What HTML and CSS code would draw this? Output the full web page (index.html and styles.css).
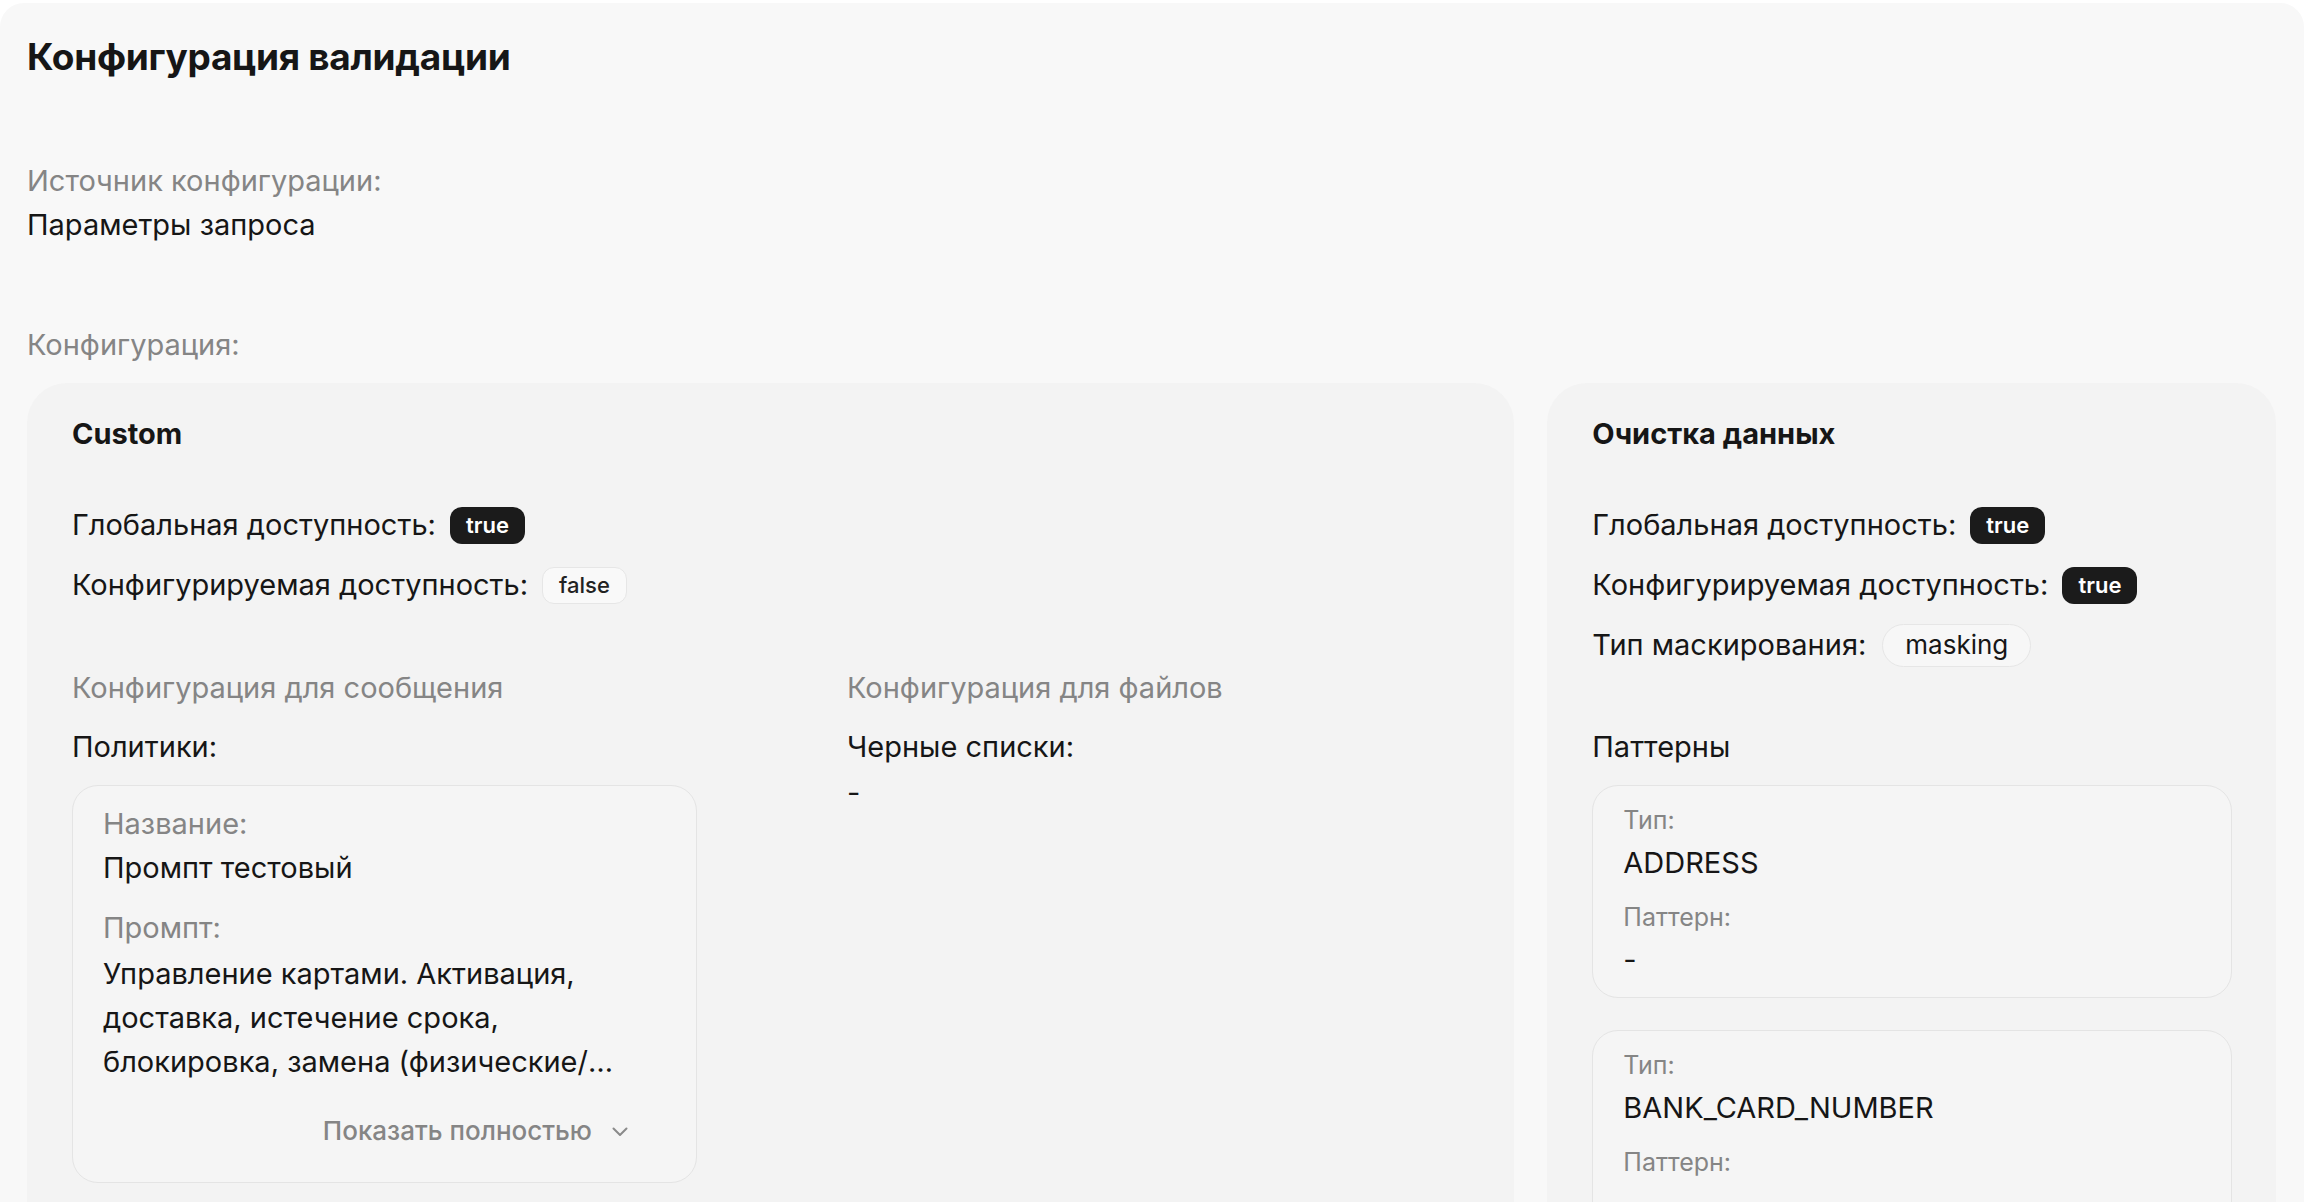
FILE: index.html
```html
<!DOCTYPE html>
<html lang="ru">
<head>
<meta charset="utf-8">
<title>Конфигурация валидации</title>
<link rel="stylesheet" href="styles.css">
</head>
<body>
<main class="panel">
  <h1 class="title">Конфигурация валидации</h1>

  <section class="field source">
    <div class="label">Источник конфигурации:</div>
    <div class="value">Параметры запроса</div>
  </section>

  <section class="field config">
    <div class="label">Конфигурация:</div>
    <div class="cards">
      <article class="card card-custom">
        <h2 class="card-title">Custom</h2>
        <div class="props">
          <div class="prop"><span>Глобальная доступность:</span><span class="badge badge-on">true</span></div>
          <div class="prop"><span>Конфигурируемая доступность:</span><span class="badge badge-off">false</span></div>
        </div>
        <div class="columns">
          <div class="col">
            <div class="sub">Конфигурация для сообщения</div>
            <div class="col-label">Политики:</div>
            <div class="item policy">
              <div class="item-label">Название:</div>
              <div class="item-value">Промпт тестовый</div>
              <div class="item-label gap">Промпт:</div>
              <div class="item-value clamp">Управление картами. Активация, доставка, истечение срока, блокировка, замена (физические/виртуальные), перевыпуск и закрытие карт.</div>
              <div class="more"><span>Показать полностью</span>
                <svg class="chev" viewBox="0 0 16 10" width="16" height="10"><path d="M1.5 1.5 L8 8 L14.5 1.5" fill="none" stroke="#8a8a8a" stroke-width="2" stroke-linecap="round" stroke-linejoin="round"/></svg>
              </div>
            </div>
          </div>
          <div class="col">
            <div class="sub">Конфигурация для файлов</div>
            <div class="col-label">Черные списки:</div>
            <div class="dash">-</div>
          </div>
        </div>
      </article>

      <article class="card card-clean">
        <h2 class="card-title">Очистка данных</h2>
        <div class="props">
          <div class="prop"><span>Глобальная доступность:</span><span class="badge badge-on">true</span></div>
          <div class="prop"><span>Конфигурируемая доступность:</span><span class="badge badge-on">true</span></div>
          <div class="prop"><span>Тип маскирования:</span><span class="pill">masking</span></div>
        </div>
        <div class="col-label patterns">Паттерны</div>
        <div class="item pattern">
          <div class="p-label">Тип:</div>
          <div class="p-value">ADDRESS</div>
          <div class="p-label gap2">Паттерн:</div>
          <div class="p-value">-</div>
        </div>
        <div class="item pattern">
          <div class="p-label">Тип:</div>
          <div class="p-value">BANK_CARD_NUMBER</div>
          <div class="p-label gap2">Паттерн:</div>
          <div class="p-value">-</div>
        </div>
      </article>
    </div>
  </section>
</main>
</body>
</html>
```
FILE: styles.css
```css
* { box-sizing: border-box; }
html, body { margin: 0; padding: 0; background: #ffffff; }
body {
  font-family: "Inter", "Noto Sans", sans-serif;
  color: #161616;
  overflow: hidden;
}
.panel {
  margin-top: 3px;
  width: 2304px;
  height: 1199px;
  background: #f8f8f8;
  border-radius: 24px 24px 0 0;
  padding: 31px 28px 0 27px;
}
.title {
  margin: 0;
  font-size: 37px;
  line-height: 46px;
  font-weight: 700;
  letter-spacing: -0.3px;
}
.field { margin-top: 79px; }
.field.config { margin-top: 76px; }
.label {
  font-size: 29px;
  line-height: 44px;
  color: #858585;
}
.value {
  font-size: 29px;
  line-height: 44px;
}
.cards {
  margin-top: 16px;
  display: flex;
  gap: 33px;
  align-items: flex-start;
}
.card {
  background: #f3f3f3;
  border-radius: 40px;
  padding: 31px 44px 60px 45px;
}
.card-custom { width: 1488px; }
.card-clean { width: 729px; }
.card-title {
  margin: 0;
  font-size: 29px;
  line-height: 40px;
  font-weight: 700;
}
.props {
  margin-top: 51px;
  display: flex;
  flex-direction: column;
  gap: 20px;
}
.prop {
  display: flex;
  align-items: center;
  gap: 14px;
  font-size: 29px;
  line-height: 40px;
}
.badge {
  display: inline-flex;
  align-items: center;
  justify-content: center;
  height: 37px;
  padding: 0 16px;
  border-radius: 12px;
  font-size: 22px;
  font-weight: 600;
}
.badge-on { background: #1b1b1b; color: #fff; }
.badge-off {
  background: #f9f9f9;
  border: 1.5px solid #e6e6e6;
  color: #222;
  font-weight: 500;
}
.pill {
  display: inline-flex;
  align-items: center;
  height: 43px;
  margin: -3px 0 -3px 2px;
  padding: 0 22px;
  border-radius: 22px;
  border: 1.5px solid #e6e6e6;
  background: #f7f7f7;
  font-size: 26px;
}
.columns {
  margin-top: 61px;
  display: grid;
  grid-template-columns: 625px 1fr;
  column-gap: 150px;
}
.sub {
  font-size: 29px;
  line-height: 44px;
  color: #858585;
}
.col-label {
  margin-top: 15px;
  font-size: 29px;
  line-height: 44px;
}
.col-label.patterns { margin-top: 60px; }
.dash { font-size: 29px; line-height: 44px; margin-top: 2px; }
.item {
  border: 1.5px solid #e4e4e4;
  border-radius: 26px;
  background: #f5f5f5;
}
.policy {
  margin-top: 16px;
  padding: 16px 30px 31px 30px;
}
.item-label {
  font-size: 29px;
  line-height: 44px;
  color: #858585;
}
.item-label.gap { margin-top: 16px; }
.item-value {
  font-size: 29px;
  line-height: 44px;
}
.clamp {
  margin-top: 2px;
  display: -webkit-box;
  -webkit-box-orient: vertical;
  -webkit-line-clamp: 3;
  overflow: hidden;
}
.more {
  margin-top: 27px;
  display: flex;
  justify-content: flex-end;
  align-items: center;
  gap: 20px;
  padding-right: 38px;
  font-size: 26px;
  line-height: 40px;
  color: #858585;
  font-weight: 500;
}
.chev { display: block; margin-top: 2px; }
.pattern {
  margin-top: 16px;
  padding: 16px 30px 15px 30px;
}
.pattern + .pattern { margin-top: 32px; }
.p-label {
  font-size: 25px;
  line-height: 36px;
  color: #858585;
}
.p-label.gap2 { margin-top: 14px; }
.p-value {
  font-size: 29px;
  line-height: 44px;
  margin-top: 3px;
}
```
